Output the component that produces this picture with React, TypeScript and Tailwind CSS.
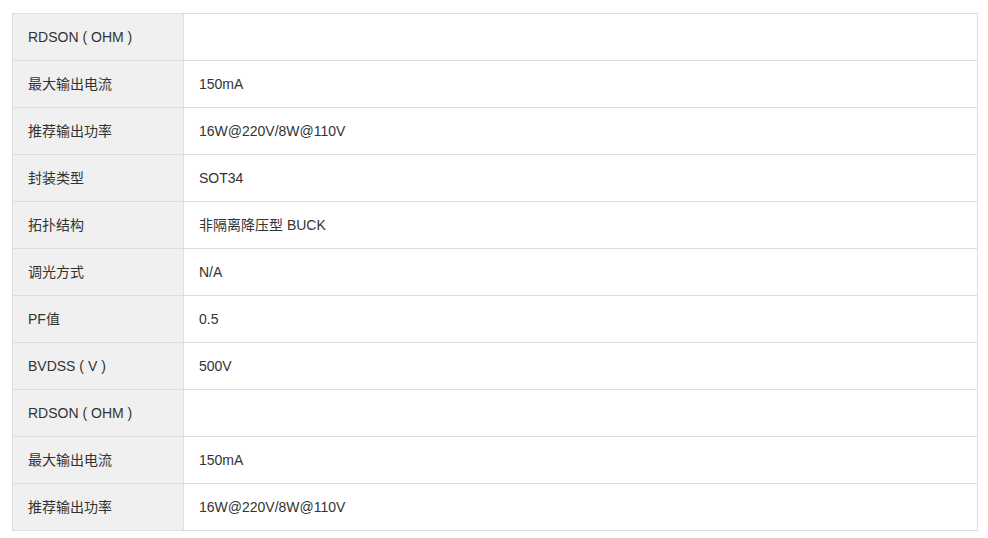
const rows: [string, string][] = [
  ["RDSON ( OHM )", ""],
  ["最大输出电流", "150mA"],
  ["推荐输出功率", "16W@220V/8W@110V"],
  ["封装类型", "SOT34"],
  ["拓扑结构", "非隔离降压型 BUCK"],
  ["调光方式", "N/A"],
  ["PF值", "0.5"],
  ["BVDSS ( V )", "500V"],
  ["RDSON ( OHM )", ""],
  ["最大输出电流", "150mA"],
  ["推荐输出功率", "16W@220V/8W@110V"],
];

export default function App() {
  return (
    <div
      className="min-h-screen bg-white pl-[12px] pt-[13px] text-[14px] text-[#333333]"
      style={{ fontFamily: '"Liberation Sans", Arial, "Noto Sans CJK SC", sans-serif' }}
    >
      <table className="w-[966px] border-collapse">
        <tbody>
          {rows.map(([label, value], i) => (
            <tr key={i} className="h-[47px]">
              <td className="w-[171px] whitespace-pre border border-[#dddddd] bg-[#f0f0f0] px-[15px] align-middle">
                {label}
              </td>
              <td className="border border-[#dddddd] px-[15px] align-middle">{value}</td>
            </tr>
          ))}
        </tbody>
      </table>
    </div>
  );
}
